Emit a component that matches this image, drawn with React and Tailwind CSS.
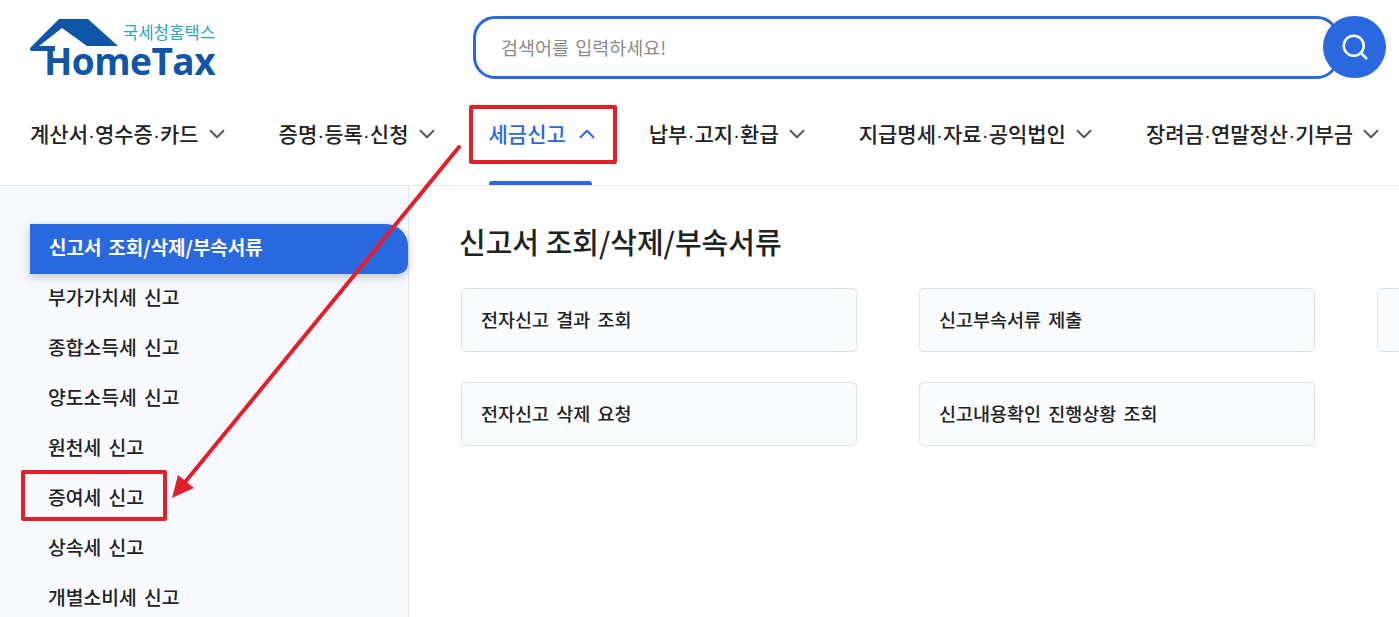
import { ChevronDown, ChevronUp, Search } from 'lucide-react';

const navItems = [
  { parts: ['계산서', '영수증', '카드'] },
  { parts: ['증명', '등록', '신청'] },
  { parts: ['세금신고'], active: true },
  { parts: ['납부', '고지', '환급'] },
  { parts: ['지급명세', '자료', '공익법인'] },
  { parts: ['장려금', '연말정산', '기부금'] },
];

const sideItems = ['부가가치세 신고', '종합소득세 신고', '양도소득세 신고', '원천세 신고', '증여세 신고', '상속세 신고', '개별소비세 신고'];

function Logo() {
  return (
    <div className="relative w-[186px] h-[60px] ml-[30px] font-['Open_Sans',sans-serif]">
      <svg className="absolute left-0 top-0" width="120" height="50" viewBox="0 0 120 50">
        <path d="M29 0 H58 L88 27 H57 L32 9 L9 27 H25 V32 H1 Q-1 30 1 28 Z" fill="#0f55a8" />
      </svg>
      <div className="absolute left-[93px] top-[3px] text-[16.5px] leading-[20px] tracking-[0.2px] text-[#2ba3b9] font-['Noto_Sans_CJK_KR',sans-serif]">국세청홈택스</div>
      <div className="absolute left-[14px] top-[28px] text-[37px] leading-[28px] font-bold text-[#0f55a8] tracking-[-0.5px]">HomeTax</div>
    </div>
  );
}

function Card({ label }) {
  return (
    <div className="w-[396px] h-[64px] shrink-0 flex items-center pl-[19px] bg-[#fbfcfe] border border-[#dde3ee] rounded-[5px] text-[18.5px] [word-spacing:3px] font-medium text-[#222]">
      {label}
    </div>
  );
}

function NavLabel({ parts }) {
  return (
    <span>
      {parts.map((part, i) => (
        <span key={part}>
          {i > 0 && <span className="font-['Liberation_Sans',sans-serif]">·</span>}
          {part}
        </span>
      ))}
    </span>
  );
}

export default function App() {
  return (
    <div className="relative w-[1399px] h-[617px] overflow-hidden bg-white font-['Noto_Sans_CJK_KR','Noto_Sans',sans-serif] text-[#222]">
      {/* Top: logo + search */}
      <div className="flex h-[97px] pt-[19px]">
        <Logo />
        <div className="flex ml-[257px] -mt-[3px] h-[63px]">
          <div className="w-[866px] h-[63px] border-[3px] border-[#2a68e0] rounded-[22px] flex items-center pl-[25px] text-[18.5px] [word-spacing:2px] text-[#8a8a8a]">
            검색어를 입력하세요!
          </div>
          <div className="w-[63px] h-[62px] -ml-[16px] rounded-full bg-[#2a68e0] flex items-center justify-center">
            <Search className="text-white" size={30} strokeWidth={2} />
          </div>
        </div>
      </div>

      {/* Nav */}
      <div className="flex h-[89px] pl-[30px] gap-[49px] border-b border-[#e4e7ee] whitespace-nowrap">
        {navItems.map((item) => (
          <div key={item.parts[0]} className={`relative flex items-start pt-[21px] text-[21px] leading-[30px] font-medium ${item.active ? 'gap-[8px] text-[#2a68e0]' : 'gap-[5px] text-[#222]'}`}>
            <NavLabel parts={item.parts} />
            {item.active ? <ChevronUp className="mt-[3px]" size={26} strokeWidth={1.75} /> : <ChevronDown className="mt-[3px] text-[#555]" size={26} strokeWidth={1.75} />}
            {item.active && <div className="absolute left-0 bottom-0 w-[103px] h-[4px] bg-[#2a68e0] rounded-t-[3px]" />}
          </div>
        ))}
      </div>

      {/* Body */}
      <div className="flex h-[431px]">
        <div className="w-[409px] shrink-0 bg-[#f8f9fe] border-r border-[#dfe3ee] pt-[38px] pl-[30px]">
          <div className="w-[378px] h-[50px] flex items-center pl-[19px] pb-[4px] bg-[#2a68e0] text-white text-[19px] [word-spacing:2.5px] font-semibold rounded-tr-[22px] rounded-br-[10px] shadow-[0_3px_10px_rgba(0,0,0,0.22)]">
            신고서 조회/삭제/부속서류
          </div>
          {sideItems.map((label) => (
            <div key={label} className="h-[50px] flex items-center pl-[18px] pb-[3px] text-[19.3px] [word-spacing:3px] font-medium text-[#222]">
              {label}
            </div>
          ))}
        </div>
        <div className="flex-1 pl-[50px] pt-[34px] overflow-hidden">
          <div className="text-[29px] leading-[42px] font-medium text-[#222]">신고서 조회/삭제/부속서류</div>
          <div className="flex gap-[62px] mt-[26px] ml-[2px]">
            <Card label="전자신고 결과 조회" />
            <Card label="신고부속서류 제출" />
            <Card label="" />
          </div>
          <div className="flex gap-[62px] mt-[30px] ml-[2px]">
            <Card label="전자신고 삭제 요청" />
            <Card label="신고내용확인 진행상황 조회" />
          </div>
        </div>
      </div>

      {/* Red annotations */}
      <div className="absolute left-[469px] top-[105px] w-[148px] h-[59px] border-[4px] border-[#e2202c] rounded-[2px]" />
      <div className="absolute left-[21px] top-[470px] w-[146px] h-[51px] border-[4px] border-[#e2202c] rounded-[2px]" />
      <svg className="absolute left-0 top-0 pointer-events-none" width="1399" height="617" viewBox="0 0 1399 617">
        <line x1="459" y1="147" x2="186" y2="481" stroke="#e2202c" strokeWidth="4" strokeLinecap="round" />
        <polygon points="172,498 178,475 194,488" fill="#e2202c" />
      </svg>
    </div>
  );
}
